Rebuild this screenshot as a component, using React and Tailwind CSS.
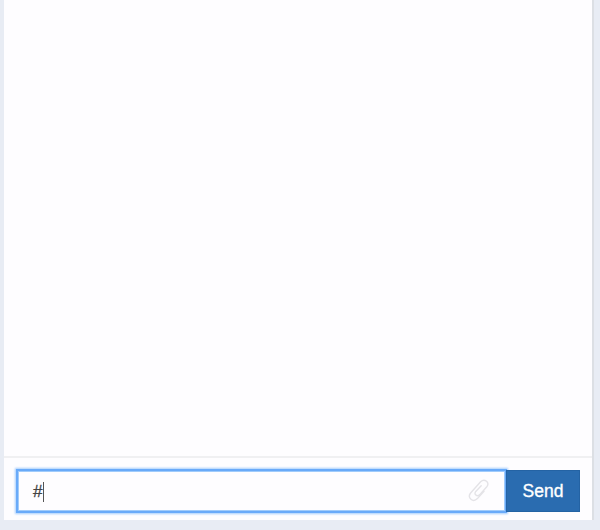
import { useState } from "react";

function PaperclipIcon() {
  return (
    <svg
      viewBox="0 0 24 24"
      className="w-6 h-6"
      fill="none"
      stroke="currentColor"
      strokeWidth="1.4"
      strokeLinecap="round"
      strokeLinejoin="round"
    >
      <path d="M18 12.2L11.4 19.6C6.8 24.2 1 18.6 4.6 14L14.6 2.8C18.6-1 24.4 3.6 20.8 7.8L13.8 15.6C11 18.2 7.4 15.2 9.8 12.4L15.2 6.8" />
    </svg>
  );
}

export default function App() {
  const [message] = useState("#");

  return (
    <div className="h-[530px] w-[600px] overflow-hidden bg-[#e8ecf4] pl-1 font-['Liberation_Sans',sans-serif]">
      <div className="flex h-[520px] w-[590px] flex-col border-r-2 border-[#dcdfe4] bg-[#fefdff]">
        {/* Messages */}
        <div className="flex-1" />

        {/* Composer */}
        <div className="flex h-16 items-start border-t-2 border-[#f0f0f2] pt-3 pl-[13px]">
          <div className="flex h-[42px] w-[489px] items-center justify-between border border-[#69aaf8] bg-[#fefdff] px-[15px] shadow-[inset_0_0_0_1px_#a0cbfb,0_0_0_1px_#69aafa,0_0_2px_2px_#a5cdfc]">
            <div className="flex items-center pt-0.5">
              <span className="text-[17px] text-[#444] [-webkit-text-stroke:0.3px_#444]">
                {message}
              </span>
              <span className="ml-px h-5 w-px bg-[#555]" />
            </div>
            <button className="text-[#e4e3e7]">
              <PaperclipIcon />
            </button>
          </div>
          <button className="relative h-[42px] w-[74px] border border-[#2463a4] bg-[#2a6cb0] pt-px text-[17.5px] text-white [-webkit-text-stroke:0.35px_white]">
            Send
          </button>
        </div>
      </div>
    </div>
  );
}
